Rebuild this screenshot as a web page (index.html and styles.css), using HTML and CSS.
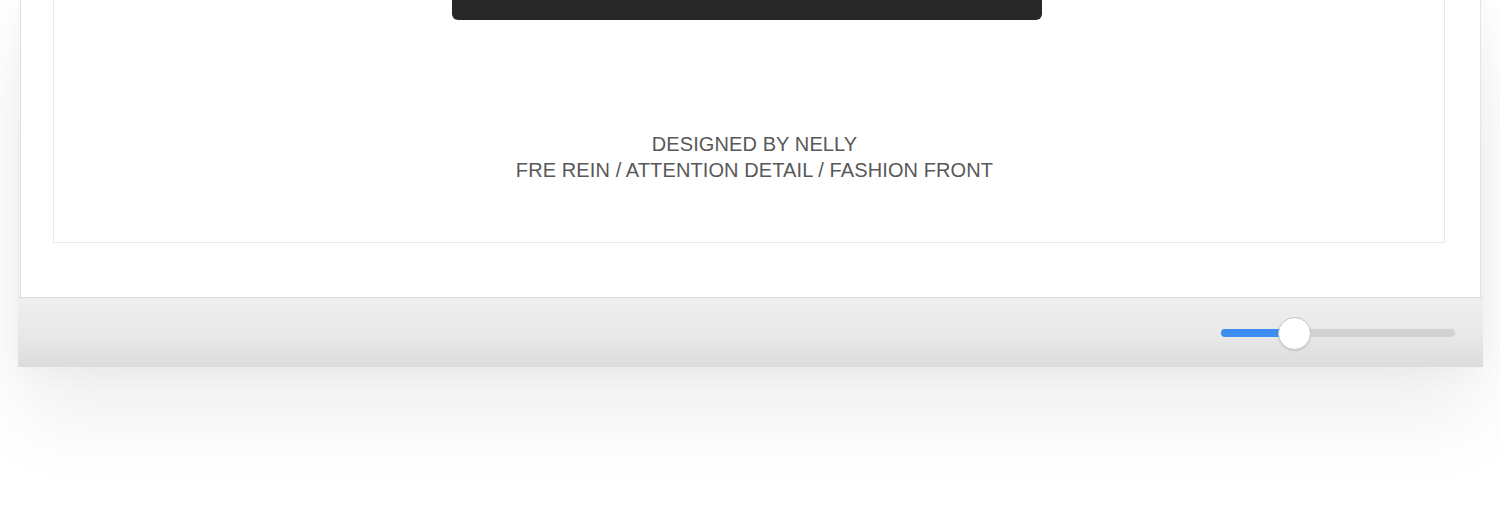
FILE: index.html
```html
<!DOCTYPE html>
<html>
<head>
<meta charset="utf-8">
<link rel="stylesheet" href="styles.css">
</head>
<body>
<div class="window">
  <div class="content">
    <div class="frame">
      <div class="bar"></div>
      <div class="credits">
        <div>DESIGNED BY NELLY</div>
        <div>FRE REIN / ATTENTION DETAIL / FASHION FRONT</div>
      </div>
    </div>
  </div>
  <div class="toolbar">
    <div class="slider">
      <div class="fill" style="width:73px"></div>
      <div class="knob" style="left:57px"></div>
    </div>
  </div>
</div>
</body>
</html>
```
FILE: styles.css
```css
html, body {
  margin: 0;
  padding: 0;
  background: #ffffff;
  height: 528px;
  overflow: hidden;
}
.window {
  margin-left: 20px;
  width: 1461px;
  box-shadow: 0 50px 80px rgba(0, 0, 0, 0.065), 0 0 30px rgba(0, 0, 0, 0.045);
}
.content {
  background: #ffffff;
  border-left: 1px solid #e0e0e0;
  border-right: 1px solid #e4e4e4;
  padding: 0 35px 54px 32px;
}
.frame {
  border: 1px solid #e9e9e9;
  border-top: none;
  height: 243px;
  box-sizing: border-box;
  display: flex;
  flex-direction: column;
  align-items: center;
}
.bar {
  width: 590px;
  height: 20px;
  background: #282828;
  border-radius: 0 0 6px 6px;
  margin-right: 4px;
}
.credits {
  margin-top: 111px;
  margin-left: 11px;
  font-family: "Liberation Sans", Arial, sans-serif;
  font-size: 20px;
  letter-spacing: 0.1px;
  line-height: 26px;
  color: #585858;
  text-align: center;
}
.toolbar {
  margin-left: -2px;
  width: 1465px;
  height: 70px;
  box-sizing: border-box;
  border-top: 1px solid #dcdcdc;
  background: linear-gradient(#f0eff0, #e9e8e9 55%, #dcdbdd);
  display: flex;
  justify-content: flex-end;
  align-items: center;
  padding-right: 28px;
}
.slider {
  position: relative;
  width: 234px;
  height: 8px;
  border-radius: 4px;
  background: #d2d2d2;
}
.fill {
  height: 8px;
  border-radius: 4px;
  background: #3b8df0;
}
.knob {
  position: absolute;
  top: -12px;
  width: 31px;
  height: 31px;
  border-radius: 50%;
  background: #ffffff;
  border: 1px solid #c8c8c8;
  box-shadow: 0 1px 2px rgba(0, 0, 0, 0.12);
}
```
